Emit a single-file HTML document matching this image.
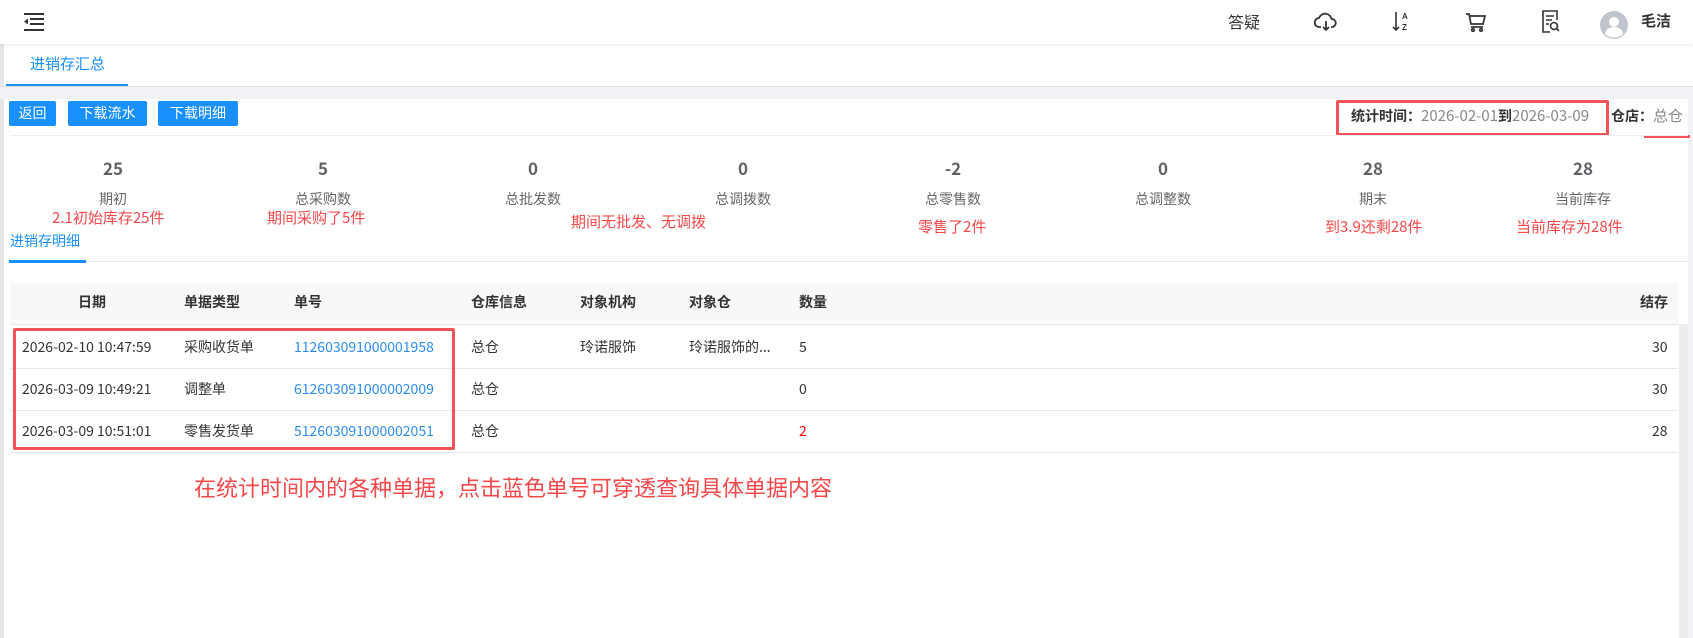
<!DOCTYPE html>
<html><head><meta charset="utf-8"><style>
*{margin:0;padding:0;box-sizing:border-box}
body{width:1693px;height:638px;overflow:hidden;background:#fff;font-family:"Noto Sans CJK SC","Liberation Sans",sans-serif;font-size:14px;line-height:1.2;color:#333;position:relative}
.a{position:absolute;white-space:nowrap}
.btn{position:absolute;top:101px;height:25px;background:#1890ff;color:#fff;font-size:14px;line-height:25px;text-align:center;border-radius:2px}
.num{position:absolute;top:158px;width:210px;text-align:center;font-size:17px;font-weight:bold;color:#606266}
.lab{position:absolute;top:191px;width:210px;text-align:center;font-size:14px;color:#666}
.red{color:#f5484a;font-size:15px}
.th{position:absolute;top:294px;font-size:14px;font-weight:bold;color:#333}
.td{position:absolute;font-size:14px;color:#333}
.blue{color:#2d8cf0}
.hl{position:absolute;left:10px;width:1668px;height:1px;background:#e8e8e8}
</style></head><body>
<div class="a" style="left:0;top:0;width:1693px;height:44px;background:#fff;box-shadow:0 1px 4px rgba(0,0,0,.1);z-index:2"></div>
<svg class="a" style="left:24px;top:12px;z-index:3" width="20" height="20" viewBox="0 0 20 20"><g fill="#333"><rect x="0" y="1" width="20" height="2"/><rect x="6" y="6" width="14" height="2"/><rect x="6" y="11" width="14" height="2"/><rect x="0" y="17" width="20" height="2"/><path d="M0 9.5L4 6.5V12.5Z"/></g></svg>
<div class="a" style="left:1228px;top:12px;font-size:16px;color:#333;z-index:3">答疑</div>
<svg class="a" style="left:1314px;top:12px;z-index:3" width="24" height="20" viewBox="0 0 24 20" fill="none" stroke="#333" stroke-width="1.8"><path d="M7 15H5.5A4.5 4.5 0 0 1 5 6a6.5 6.5 0 0 1 12.5 1A4 4 0 0 1 18 15h-1"/><path d="M12 9v9M9 15l3 3 3-3"/></svg>
<svg class="a" style="left:1392px;top:11px;z-index:3" width="20" height="22" viewBox="0 0 20 22" fill="none" stroke="#333" stroke-width="1.6"><path d="M4 1v18M1 16l3 3 3-3"/><text x="10" y="8" font-size="8" fill="#333" stroke="none" font-family="Liberation Sans" font-weight="bold">A</text><text x="10" y="19" font-size="8" fill="#333" stroke="none" font-family="Liberation Sans" font-weight="bold">Z</text></svg>
<svg class="a" style="left:1465px;top:12px;z-index:3" width="22" height="20" viewBox="0 0 22 20" fill="none" stroke="#333" stroke-width="1.7"><path d="M1 2h3l2 10h12l2-8H5"/><path d="M6 15h12"/><circle cx="8" cy="18" r="1.3"/><circle cx="16" cy="18" r="1.3"/></svg>
<svg class="a" style="left:1541px;top:10px;z-index:3" width="20" height="24" viewBox="0 0 20 24" fill="none" stroke="#333" stroke-width="1.6"><path d="M9 22H2V1h14v9"/><path d="M5 6h8M5 10h6M5 14h3"/><circle cx="13" cy="16" r="3.5"/><path d="M15.5 18.5L18 21"/></svg>
<svg class="a" style="left:1600px;top:11px;z-index:3" width="28" height="28" viewBox="0 0 28 28"><circle cx="14" cy="14" r="14" fill="#c0c4cc"/><circle cx="14" cy="11" r="5" fill="#fff"/><path d="M5 23a9 7 0 0 1 18 0a13 13 0 0 1-18 0z" fill="#fff"/></svg>
<div class="a" style="left:1641px;top:12px;font-size:15px;color:#333;font-weight:bold;z-index:3">毛洁</div>
<div class="a" style="left:0;top:44px;width:4px;height:594px;background:#e4e6ea"></div>
<div class="a" style="left:30px;top:55px;font-size:15px;color:#1890ff">进销存汇总</div>
<div class="a" style="left:6px;top:84px;width:122px;height:2px;background:#1890ff"></div>
<div class="a" style="left:0;top:86px;width:1693px;height:13px;background:#f0f2f5;border-top:1px solid #dcdfe6"></div>
<div class="a" style="left:1688px;top:99px;width:5px;height:539px;background:#f0f2f5"></div>
<div class="btn" style="left:9px;width:47px">返回</div>
<div class="btn" style="left:68px;width:79px">下载流水</div>
<div class="btn" style="left:158px;width:80px">下载明细</div>
<div class="a" style="left:1336px;top:100px;width:273px;height:36px;border:3px solid #f05458;border-radius:2px"></div>
<div class="a" style="left:1351px;top:107px;font-size:14px;color:#333;font-weight:bold">统计时间：<span style="color:#888;font-weight:normal;font-size:15px">2026-02-01</span>到<span style="color:#888;font-weight:normal;font-size:15px">2026-03-09</span></div>
<div class="a" style="left:1611px;top:107px;font-size:14px;color:#333;font-weight:bold">仓店：<span style="color:#888;font-weight:normal;font-size:15px">总仓</span></div>
<div class="a" style="left:1644px;top:135px;width:46px;height:3px;background:#f05458"></div>
<div class="a" style="left:10px;top:135px;width:1678px;height:1px;background:#ebeef5"></div>
<div class="num" style="left:8px">25</div><div class="num" style="left:218px">5</div><div class="num" style="left:428px">0</div><div class="num" style="left:638px">0</div><div class="num" style="left:848px">-2</div><div class="num" style="left:1058px">0</div><div class="num" style="left:1268px">28</div><div class="num" style="left:1478px">28</div>
<div class="lab" style="left:8px">期初</div><div class="lab" style="left:218px">总采购数</div><div class="lab" style="left:428px">总批发数</div><div class="lab" style="left:638px">总调拨数</div><div class="lab" style="left:848px">总零售数</div><div class="lab" style="left:1058px">总调整数</div><div class="lab" style="left:1268px">期末</div><div class="lab" style="left:1478px">当前库存</div>
<div class="a red" style="left:52px;top:209px">2.1初始库存25件</div>
<div class="a red" style="left:267px;top:209px">期间采购了5件</div>
<div class="a red" style="left:571px;top:213px">期间无批发、无调拨</div>
<div class="a red" style="left:918px;top:218px">零售了2件</div>
<div class="a red" style="left:1325px;top:218px">到3.9还剩28件</div>
<div class="a red" style="left:1516px;top:218px">当前库存为28件</div>
<div class="a" style="left:10px;top:233px;font-size:14px;color:#1890ff">进销存明细</div>
<div class="a" style="left:10px;top:261px;width:1678px;height:1px;background:#e8e8e8"></div>
<div class="a" style="left:9px;top:260px;width:77px;height:3px;background:#1890ff"></div>
<div class="a" style="left:10px;top:283px;width:1669px;height:41px;background:#f8f8f9"></div>
<div class="a" style="left:1679px;top:324px;width:9px;height:314px;background:#ededed"></div>
<div class="th" style="left:78px">日期</div><div class="th" style="left:184px">单据类型</div><div class="th" style="left:294px">单号</div><div class="th" style="left:471px">仓库信息</div><div class="th" style="left:580px">对象机构</div><div class="th" style="left:689px">对象仓</div><div class="th" style="left:799px">数量</div><div class="th" style="left:1640px">结存</div>
<div class="hl" style="top:324px"></div><div class="hl" style="top:368px"></div><div class="hl" style="top:410px"></div><div class="hl" style="top:452px"></div>
<div class="td" style="left:22px;top:339px">2026-02-10 10:47:59</div><div class="td" style="left:184px;top:339px">采购收货单</div><div class="td blue" style="left:294px;top:339px">112603091000001958</div><div class="td" style="left:471px;top:339px">总仓</div><div class="td" style="left:580px;top:339px">玲诺服饰</div><div class="td" style="left:689px;top:339px">玲诺服饰的...</div><div class="td" style="left:799px;top:339px">5</div><div class="td" style="left:1652px;top:339px">30</div>
<div class="td" style="left:22px;top:381px">2026-03-09 10:49:21</div><div class="td" style="left:184px;top:381px">调整单</div><div class="td blue" style="left:294px;top:381px">612603091000002009</div><div class="td" style="left:471px;top:381px">总仓</div><div class="td" style="left:799px;top:381px">0</div><div class="td" style="left:1652px;top:381px">30</div>
<div class="td" style="left:22px;top:423px">2026-03-09 10:51:01</div><div class="td" style="left:184px;top:423px">零售发货单</div><div class="td blue" style="left:294px;top:423px">512603091000002051</div><div class="td" style="left:471px;top:423px">总仓</div><div class="td" style="left:799px;top:423px;color:#f00">2</div><div class="td" style="left:1652px;top:423px">28</div>
<div class="a" style="left:13px;top:328px;width:442px;height:122px;border:3px solid #f05458;border-radius:2px"></div>
<div class="a" style="left:194px;top:474px;font-size:22px;color:#f5484a">在统计时间内的各种单据，点击蓝色单号可穿透查询具体单据内容</div>
</body></html>
